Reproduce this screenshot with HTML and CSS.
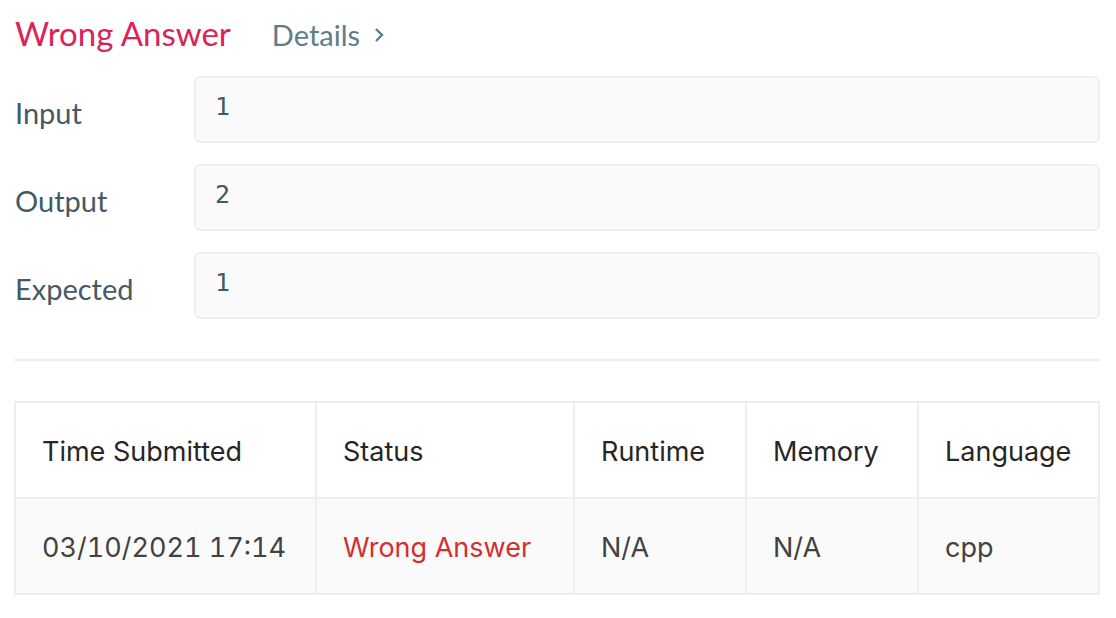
FILE: index.html
```html
<!DOCTYPE html>
<html>
<head>
<meta charset="utf-8">
<link rel="stylesheet" href="styles.css">
</head>
<body>
<div class="page">
  <div class="result-head">
    <span class="result-title">Wrong Answer</span>
    <a class="details">Details
      <svg class="chev" width="10" height="16" viewBox="0 0 10 16"><path d="M2 2 L8 8 L2 14" fill="none" stroke="#607d8b" stroke-width="2.4"/></svg>
    </a>
  </div>
  <div class="io">
    <div class="io-label">Input</div>
    <div class="io-box">1</div>
    <div class="io-label">Output</div>
    <div class="io-box">2</div>
    <div class="io-label">Expected</div>
    <div class="io-box">1</div>
  </div>
  <hr class="sep">
  <table class="subs">
    <colgroup>
      <col class="c-time"><col class="c-status"><col class="c-rt"><col class="c-mem"><col class="c-lang">
    </colgroup>
    <thead>
      <tr><th>Time Submitted</th><th>Status</th><th>Runtime</th><th>Memory</th><th>Language</th></tr>
    </thead>
    <tbody>
      <tr><td class="num">03/10/2021 17:14</td><td class="wa">Wrong Answer</td><td>N/A</td><td>N/A</td><td>cpp</td></tr>
    </tbody>
  </table>
</div>
</body>
</html>
```

FILE: styles.css
```css
html, body {
  margin: 0;
  padding: 0;
  background: #fff;
}
.page {
  padding: 0 16px 0 14px;
  font-family: Lato, "Open Sans", sans-serif;
}
.result-head {
  display: flex;
  align-items: baseline;
  height: 76px;
  padding-top: 13px;
  padding-left: 1px;
  box-sizing: border-box;
}
.result-title {
  font-size: 33px;
  color: #dd2258;
  line-height: 40px;
}
.details {
  margin-left: 41px;
  font-size: 29px;
  color: #607d8b;
  display: flex;
  align-items: center;
}
.chev {
  margin-left: 14px;
}
.io {
  display: grid;
  grid-template-columns: 180px 1fr;
  row-gap: 21px;
}
.io-label {
  font-size: 29px;
  color: #455a64;
  display: flex;
  align-items: center;
  height: 67px;
  padding-top: 5px;
  padding-left: 1px;
  box-sizing: border-box;
}
.io-box {
  height: 67px;
  box-sizing: border-box;
  border: 2px solid #eee;
  border-radius: 6px;
  background: #fafafa;
  font-family: "DejaVu Sans Mono", monospace;
  font-size: 25px;
  color: #455a64;
  padding: 14px 19px;
  line-height: 30px;
}
.sep {
  border: 0;
  border-top: 2px solid #eee;
  margin: 40px 0 40px 0;
  height: 0;
}
.subs {
  width: 100%;
  table-layout: fixed;
  border-collapse: collapse;
  font-family: Inter, Roboto, sans-serif;
  font-size: 27px;
}
.c-time { width: 301px; }
.c-status { width: 258px; }
.c-rt { width: 172px; }
.c-mem { width: 172px; }
.subs th, .subs td {
  border: 2px solid #eee;
  text-align: left;
  padding: 3px 26px 0 26px;
  height: 96px;
  box-sizing: border-box;
  white-space: nowrap;
}
.subs th {
  font-weight: 400;
  color: #262626;
  background: #fff;
}
.subs td {
  color: #424242;
  background: #fafafa;
}
.subs td.num {
  font-variant-numeric: tabular-nums;
}
.subs td.wa {
  color: #d32f2f;
}
```
